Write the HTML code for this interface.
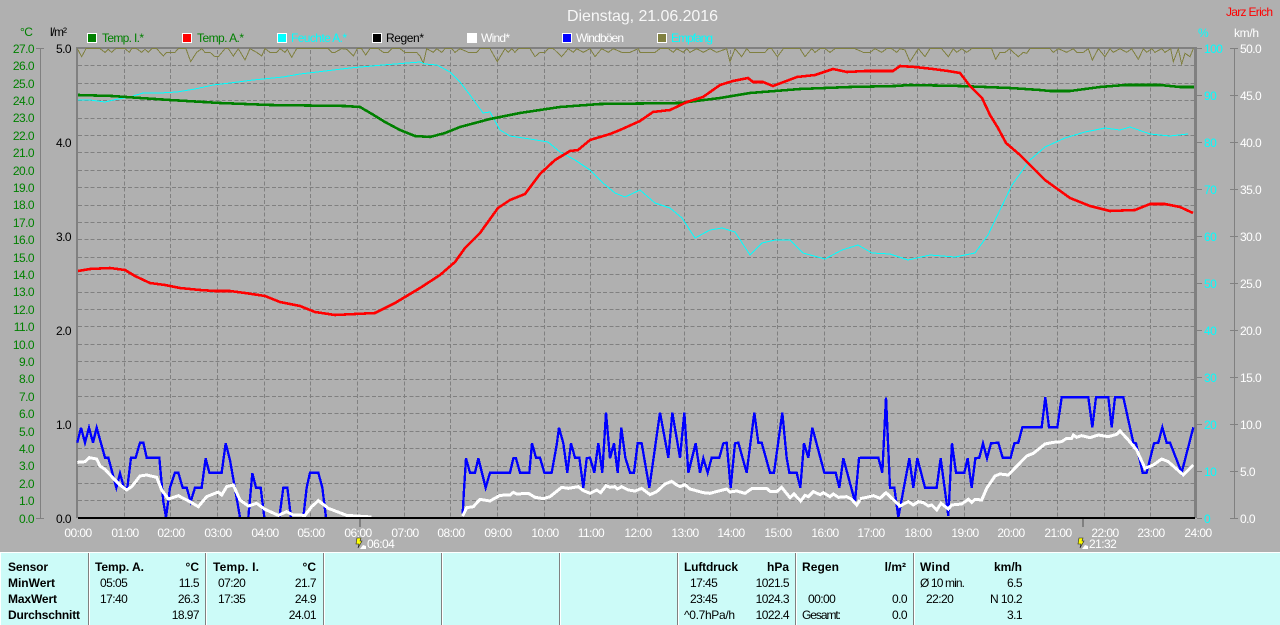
<!DOCTYPE html>
<html><head><meta charset="utf-8"><style>
html,body{margin:0;padding:0;background:#b0b0b0;overflow:hidden}
svg{display:block;font-family:"Liberation Sans",sans-serif;font-size:12px;letter-spacing:-.55px}
.g text{fill:#008000}.c text{fill:#0ff}.w text{fill:#fff}.k text{fill:#000}
.l{fill:none;stroke-linejoin:miter;shape-rendering:crispEdges}
</style></head><body>
<svg width="1280" height="625" viewBox="0 0 1280 625" xmlns="http://www.w3.org/2000/svg">
<rect width="1280" height="625" fill="#b0b0b0"/>
<text x="567" y="21" font-size="16" fill="#fff" textLength="151" style="letter-spacing:0;font-weight:normal" opacity=".9">Dienstag, 21.06.2016</text>
<text x="1226" y="16" fill="#f00" textLength="47" style="letter-spacing:0">Jarz Erich</text>

<!-- legend -->
<g stroke="#fff" stroke-width="1" shape-rendering="crispEdges">
<rect x="87.5" y="33.5" width="9" height="9" fill="#008000"/>
<rect x="182.5" y="33.5" width="9" height="9" fill="#f00"/>
<rect x="277.5" y="33.5" width="9" height="9" fill="#0ff"/>
<rect x="372.5" y="33.5" width="9" height="9" fill="#000"/>
<rect x="467.5" y="33.5" width="9" height="9" fill="#fff"/>
<rect x="562.5" y="33.5" width="9" height="9" fill="#00f"/>
<rect x="657.5" y="33.5" width="9" height="9" fill="#808040"/>
</g>
<g style="letter-spacing:0">
<text x="102" y="42" fill="#008000" textLength="42">Temp. I.*</text>
<text x="197" y="42" fill="#008000" textLength="47">Temp. A.*</text>
<text x="291" y="42" fill="#0ff" textLength="56">Feuchte A.*</text>
<text x="386" y="42" fill="#000" textLength="38">Regen*</text>
<text x="481" y="42" fill="#fff" textLength="29">Wind*</text>
<text x="576" y="42" fill="#fff" textLength="48">Windböen</text>
<text x="671" y="42" fill="#0ff" textLength="42">Empfang</text>
</g>

<!-- grid -->
<path stroke="#808080" stroke-width="1" stroke-dasharray="4 2.25" fill="none" shape-rendering="crispEdges" d="M78 65.5H1194M78 83.5H1194M78 100.5H1194M78 118.5H1194M78 135.5H1194M78 152.5H1194M78 170.5H1194M78 187.5H1194M78 205.5H1194M78 222.5H1194M78 239.5H1194M78 257.5H1194M78 274.5H1194M78 292.5H1194M78 309.5H1194M78 326.5H1194M78 344.5H1194M78 361.5H1194M78 379.5H1194M78 396.5H1194M78 413.5H1194M78 431.5H1194M78 448.5H1194M78 466.5H1194M78 483.5H1194M78 500.5H1194
M124.5 50V518M170.5 50V518M217.5 50V518M264.5 50V518M310.5 50V518M357.5 50V518M404.5 50V518M450.5 50V518M497.5 50V518M544.5 50V518M590.5 50V518M637.5 50V518M684.5 50V518M730.5 50V518M777.5 50V518M824.5 50V518M870.5 50V518M917.5 50V518M964.5 50V518M1010.5 50V518M1057.5 50V518M1104.5 50V518M1150.5 50V518"/>

<!-- axes -->
<g shape-rendering="crispEdges">
<rect x="40" y="48" width="1" height="470" fill="#808080"/>
<rect x="36" y="48" width="8" height="1" fill="#808080"/>
<rect x="36" y="518" width="8" height="1" fill="#808080"/>
<rect x="76" y="47" width="1121" height="2" fill="#808080"/>
<rect x="76" y="47" width="2" height="471" fill="#808080"/>
<rect x="1194" y="47" width="3" height="471" fill="#808080"/>
<rect x="1193" y="48" width="9" height="1" fill="#808080"/>
<rect x="1234" y="48" width="1" height="470" fill="#808080"/>
<path fill="none" stroke="#808080" d="M1197 95.500H1202M1197 142.500H1202M1197 189.500H1202M1197 236.500H1202M1197 283.500H1202M1197 330.500H1202M1197 377.500H1202M1197 424.500H1202M1197 471.500H1202M1197 518.500H1202M1230 48.500H1238M1230 95.500H1238M1230 142.500H1238M1230 189.500H1238M1230 236.500H1238M1230 283.500H1238M1230 330.500H1238M1230 377.500H1238M1230 424.500H1238M1230 471.500H1238M1230 518.500H1238"/>
<rect x="359" y="518" width="2" height="9" fill="#808080"/>
<rect x="1082" y="518" width="2" height="9" fill="#808080"/>
</g>

<!-- empfang -->
<g class="l" stroke="#808040" stroke-width="3" transform="translate(0,0) scale(.33333)">
<polyline points="232,146 245,170 258,146 300,146 315,157 325,148 335,157 347,146 375,146 388,157 395,146 410,146 425,157 435,148 445,157 455,146 470,146 490,168 500,157 525,157 535,146 558,146 572,185 590,157 605,146 615,157 630,157 645,170 655,170 675,146 685,146 700,168 715,146 735,180 750,146 770,157 785,168 795,146 810,157 830,157 840,146 855,157 862,148 875,172 890,146 985,146 995,157 1005,157 1025,146 1040,148 1060,168 1072,146 1085,146 1097,165 1110,146 1135,146 1150,157 1165,157 1175,146 1200,146 1215,157 1250,157 1260,168"/>
</g>
<g class="l" stroke="#808040" stroke-width="3" transform="translate(420,0) scale(.33333)">
<polyline points="0,168 10,190 20,146 40,157 50,146 65,157 75,146 95,146 105,157 120,146 145,157 170,157 180,146 210,146 232,185 255,146 265,157 275,146 285,157 295,146 330,146 345,170 360,157 375,157 385,146 400,146 425,170 445,146 460,157 470,146 490,157 510,146 525,170 545,146 565,157 580,146 605,157 630,157 655,146 660,157 705,157 720,146 745,146 760,157 770,146 790,157 800,146 810,157 830,146 850,157 870,146 890,157 920,146 930,185 945,146 965,170 980,146 990,157 1035,157 1045,146 1055,146 1072,170 1090,146 1140,146 1155,170 1175,146 1185,157 1200,146 1215,146 1230,157 1245,146 1290,146"/>
</g>
<g class="l" stroke="#808040" stroke-width="3" transform="translate(850,0) scale(.33333)">
<polyline points="0,146 15,146 40,157 60,157 75,146 95,157 110,146 125,146 140,157 150,146 165,150 180,185 205,146 225,170 240,146 275,146 295,170 310,146 320,157 335,146 350,157 365,146 425,146 437,178 450,157 465,157 480,146 490,157 505,170 520,157 530,160 540,146 600,146 610,157 625,146 650,157 670,146 680,157 700,157 715,146 727,180 745,146 765,170 780,146 790,157 810,146 830,157 845,146 865,178 880,146 890,157 905,146 915,157 935,146 945,157 962,146 970,185 985,146 995,192 1005,160 1020,170 1030,146"/>
</g>

<!-- feuchte -->
<polyline class="l" stroke="#0ff" stroke-width="1" points="78,100 90,100 105,102 118,99 130,97 143,93 160,93 177,92 195,89 213,85 230,83 253,80 283,77 300,74 317,72 350,68 383,65 420,62 425,64 437,65 450,72 460,82 470,95 483,113 490,112 500,130 510,136 530,139 548,142 560,152 575,160 590,170 603,183 615,193 625,197 640,190 655,203 670,208 682,218 695,238 710,230 722,228 735,232 750,255 762,243 775,240 790,240 803,253 825,259 842,250 858,245 872,253 890,254 908,260 930,255 955,257 975,253 988,235 1000,210 1012,185 1030,160 1045,147 1065,138 1085,132 1105,128 1120,130 1130,127 1150,134 1170,136 1188,134"/>

<!-- temp i -->
<polyline class="l" stroke="#008000" stroke-width="2.6" points="78,95 112,96 140,98 170,100 220,103 270,105 345,106 360,107 372,114 385,122 400,130 415,136 430,137 445,133 460,127 490,119 520,113 560,107 600,104 680,103 720,98 750,93 800,89 850,87 895,86 910,85 960,86 1010,88 1040,90 1050,91 1070,91 1100,87 1125,85 1160,85 1180,87 1194,87"/>
<!-- temp a -->
<polyline class="l" stroke="#f00" stroke-width="2.6" points="78,271 90,269 110,268 125,270 135,276 150,283 165,285 180,288 200,290 215,291 230,291 245,293 265,296 280,302 300,306 315,312 335,315 375,313 395,303 420,288 440,275 455,262 465,248 480,233 498,208 510,200 525,194 540,174 555,160 570,151 578,150 590,140 610,134 620,130 640,121 653,112 670,110 687,102 703,97 720,85 733,81 748,78 753,82 763,82 773,86 797,77 815,75 833,69 847,72 865,71 893,71 900,66 915,67 933,69 948,71 960,73 970,86 982,98 990,115 998,128 1006,143 1020,155 1045,180 1070,198 1090,206 1110,211 1135,210 1150,204 1165,204 1180,207 1193,213"/>

<!-- windböen -->
<g class="l" stroke="#00f" stroke-width="7">
<g transform="translate(0,390) scale(.33333)">
<polyline points="232,158 243,113 255,158 267,113 279,158 290,113 315,203 325,203 349,293 360,250 372,293 382,293 393,203 407,203 420,158 430,158 440,203 478,203 490,335 498,382 510,293 525,248 535,248 548,293 560,293 572,335 585,293 605,293 617,205 628,248 665,248 677,160 690,210 720,382"/>
<polyline points="745,382 757,250 768,293 782,293 793,382"/>
<polyline points="838,382 850,293 862,293 873,382"/>
<polyline points="910,382 920,293 930,248 955,248 967,293 978,382"/>
</g>
<polyline transform="translate(440,390) scale(.33333)" points="68,370 72,300 78,205 90,248 105,248 115,205 137,293 150,248 210,248 220,205 228,205 240,248 268,248 276,160 288,203 300,203 313,248 335,248 350,165 357,113 370,160 382,248 393,160 405,203 418,203 430,293 440,205 450,203 463,248 475,160 487,248 498,68 510,205 522,160 533,248 544,113 556,203 570,248 582,248 593,160 605,160 628,293 660,68 685,203 697,68 720,203 733,68 745,248 767,160 780,248 790,205 803,248 815,203 838,203 850,160 860,158 872,293 885,160 895,158 920,248 943,68 955,158 965,158 990,248 1002,248 1027,68 1040,203 1048,248 1070,248 1081,293 1092,160 1105,203 1117,113 1153,248 1187,248 1198,293 1210,205 1245,335 1257,205 1260,205"/>
<polyline transform="translate(860,390) scale(.33333)" points="0,203 55,203 67,248 78,22 90,293 103,293 115,382 148,205 160,293 172,205 195,293 230,293 242,205 265,378 276,160 288,248 313,248 323,205 335,293 346,205 358,203 369,160 381,205 393,160 415,158 428,203 452,203 463,160 475,158 487,112 545,112 556,22 567,112 592,112 605,22 685,22 697,112 708,22 745,22 755,112 765,22 790,22 820,158 828,160 848,248 860,248 882,160 895,158 907,112 920,158 930,158 965,248 1000,112"/>
</g>
<!-- wind -->
<g class="l" stroke="#fff" stroke-width="9">
<polyline transform="translate(0,390) scale(.33333)" points="232,217 255,215 268,203 290,207 300,228 315,238 340,265 360,285 380,300 395,290 420,258 440,255 470,262 485,300 505,327 535,317 560,330 575,338 595,350 620,320 655,306 665,315 680,290 700,285 720,330 745,348 770,340 795,358 835,376 860,365 880,375 915,376 935,350 955,332 985,355 1040,376 1115,381"/>
<polyline transform="translate(440,390) scale(.33333)" points="68,378 80,353 100,350 120,328 150,333 180,316 210,315 220,307 230,312 265,310 285,322 310,326 330,320 365,292 385,295 415,290 430,302 450,310 470,300 482,308 498,287 510,292 525,290 532,297 545,290 565,300 585,303 605,295 630,314 650,305 675,282 695,274 710,285 720,290 735,284 750,297 790,308 810,310 840,302 860,297 870,306 890,303 915,310 935,296 980,295 990,304 1010,305 1025,292 1050,323 1062,312 1082,333 1095,316 1105,320 1120,305 1140,314 1150,308 1170,320 1180,312 1195,322 1220,320 1235,328 1250,345 1260,330"/>
<polyline transform="translate(860,390) scale(.33333)" points="0,326 20,322 40,317 60,325 78,308 120,348 145,335 160,345 175,335 190,338 205,348 215,345 230,360 243,340 265,357 275,345 305,342 325,328 335,337 345,328 365,330 380,295 405,258 420,252 445,255 500,198 520,190 555,162 580,157 605,155 620,145 635,145 640,135 650,142 665,137 690,143 715,135 745,140 770,133 780,123 805,150 830,180 855,235 880,225 905,207 925,215 970,255 1000,225"/>
</g>
<rect x="78" y="517" width="1117" height="2" fill="#000" shape-rendering="crispEdges"/>

<!-- left labels -->
<text x="20" y="36" fill="#008000">°C</text>
<text x="50" y="36" fill="#000" textLength="17" style="letter-spacing:0">l/m²</text>
<g class="g">
<g text-anchor="end">
<text x="34" y="53">27.0</text><text x="34" y="70">26.0</text><text x="34" y="88">25.0</text><text x="34" y="105">24.0</text><text x="34" y="122">23.0</text><text x="34" y="140">22.0</text><text x="34" y="157">21.0</text><text x="34" y="175">20.0</text><text x="34" y="192">19.0</text><text x="34" y="209">18.0</text><text x="34" y="227">17.0</text><text x="34" y="244">16.0</text><text x="34" y="262">15.0</text><text x="34" y="279">14.0</text><text x="34" y="296">13.0</text><text x="34" y="314">12.0</text><text x="34" y="331">11.0</text><text x="34" y="349">10.0</text><text x="34" y="366">9.0</text><text x="34" y="383">8.0</text><text x="34" y="401">7.0</text><text x="34" y="418">6.0</text><text x="34" y="436">5.0</text><text x="34" y="453">4.0</text><text x="34" y="470">3.0</text><text x="34" y="488">2.0</text><text x="34" y="505">1.0</text><text x="34" y="523">0.0</text>
</g></g>
<g class="k">
<text x="56" y="53">5.0</text><text x="56" y="147">4.0</text><text x="56" y="241">3.0</text><text x="56" y="335">2.0</text><text x="56" y="429">1.0</text><text x="56" y="523">0.0</text>
</g>
<!-- right labels -->
<text x="1198" y="37" fill="#0ff">%</text>
<text x="1234" y="37" fill="#fff" textLength="25" style="letter-spacing:0">km/h</text>
<g class="c">
<text x="1204" y="53">100</text><text x="1204" y="100">90</text><text x="1204" y="147">80</text><text x="1204" y="194">70</text><text x="1204" y="241">60</text><text x="1204" y="288">50</text><text x="1204" y="335">40</text><text x="1204" y="382">30</text><text x="1204" y="429">20</text><text x="1204" y="476">10</text><text x="1204" y="523">0</text>
</g>
<g class="w">
<text x="1240" y="53">50.0</text><text x="1240" y="100">45.0</text><text x="1240" y="147">40.0</text><text x="1240" y="194">35.0</text><text x="1240" y="241">30.0</text><text x="1240" y="288">25.0</text><text x="1240" y="335">20.0</text><text x="1240" y="382">15.0</text><text x="1240" y="429">10.0</text><text x="1240" y="476">5.0</text><text x="1240" y="523">0.0</text>
</g>
<!-- time labels -->
<g class="w" text-anchor="middle">
<text x="78" y="537">00:00</text><text x="125" y="537">01:00</text><text x="171" y="537">02:00</text><text x="218" y="537">03:00</text><text x="265" y="537">04:00</text><text x="311" y="537">05:00</text><text x="358" y="537">06:00</text><text x="405" y="537">07:00</text><text x="451" y="537">08:00</text><text x="498" y="537">09:00</text><text x="545" y="537">10:00</text><text x="591" y="537">11:00</text><text x="638" y="537">12:00</text><text x="685" y="537">13:00</text><text x="731" y="537">14:00</text><text x="778" y="537">15:00</text><text x="825" y="537">16:00</text><text x="871" y="537">17:00</text><text x="918" y="537">18:00</text><text x="965" y="537">19:00</text><text x="1011" y="537">20:00</text><text x="1058" y="537">21:00</text><text x="1105" y="537">22:00</text><text x="1151" y="537">23:00</text><text x="1198" y="537">24:00</text>
</g>
<g class="w"><text x="367" y="548">06:04</text><text x="1089" y="548">21:32</text></g>
<path d="M357 538h4l-1 3h2l-4 7 1-4h-3z" fill="#ff0" stroke="#222" stroke-width=".6"/>
<path d="M360 549l3-4 3 1 0 3z" fill="#fff"/>
<path d="M1079 538h4l-1 3h2l-4 7 1-4h-3z" fill="#ff0" stroke="#222" stroke-width=".6"/>
<path d="M1082 549l3-4 3 1 0 3z" fill="#fff"/>

<!-- panel -->
<rect x="0" y="552" width="1280" height="73" fill="#ccfbf8"/>
<rect x="0" y="552" width="1280" height="1" fill="#fff"/>
<rect x="0" y="552" width="1" height="73" fill="#fff"/>
<g fill="#808080" shape-rendering="crispEdges">
<rect x="88" y="553" width="1" height="72"/><rect x="205" y="553" width="1" height="72"/><rect x="323" y="553" width="1" height="72"/><rect x="441" y="553" width="1" height="72"/><rect x="559" y="553" width="1" height="72"/><rect x="677" y="553" width="1" height="72"/><rect x="795" y="553" width="1" height="72"/><rect x="913" y="553" width="1" height="72"/>
</g>
<g fill="#fff" shape-rendering="crispEdges">
<rect x="89" y="553" width="1" height="72"/><rect x="206" y="553" width="1" height="72"/><rect x="324" y="553" width="1" height="72"/><rect x="442" y="553" width="1" height="72"/><rect x="560" y="553" width="1" height="72"/><rect x="678" y="553" width="1" height="72"/><rect x="796" y="553" width="1" height="72"/><rect x="914" y="553" width="1" height="72"/>
</g>
<g fill="#000">
<g font-weight="bold" style="letter-spacing:0">
<text x="8" y="571" textLength="40">Sensor</text><text x="8" y="587" textLength="47">MinWert</text><text x="8" y="603" textLength="49">MaxWert</text><text x="8" y="619" textLength="72">Durchschnitt</text>
<text x="95" y="571" textLength="49">Temp. A.</text><text x="199" y="571" text-anchor="end">°C</text>
<text x="213" y="571" textLength="46">Temp. I.</text><text x="316" y="571" text-anchor="end">°C</text>
<text x="684" y="571" textLength="54">Luftdruck</text><text x="789" y="571" text-anchor="end">hPa</text>
<text x="802" y="571" textLength="37">Regen</text><text x="906" y="571" text-anchor="end">l/m²</text>
<text x="920" y="571" textLength="30">Wind</text><text x="1022" y="571" text-anchor="end">km/h</text>
</g>
<text x="100" y="587">05:05</text><text x="199" y="587" text-anchor="end">11.5</text>
<text x="100" y="603">17:40</text><text x="199" y="603" text-anchor="end">26.3</text>
<text x="199" y="619" text-anchor="end">18.97</text>
<text x="218" y="587">07:20</text><text x="316" y="587" text-anchor="end">21.7</text>
<text x="218" y="603">17:35</text><text x="316" y="603" text-anchor="end">24.9</text>
<text x="316" y="619" text-anchor="end">24.01</text>
<text x="690" y="587">17:45</text><text x="789" y="587" text-anchor="end">1021.5</text>
<text x="690" y="603">23:45</text><text x="789" y="603" text-anchor="end">1024.3</text>
<text x="684" y="619" textLength="51" style="letter-spacing:0">^0.7hPa/h</text><text x="789" y="619" text-anchor="end">1022.4</text>
<text x="808" y="603">00:00</text><text x="907" y="603" text-anchor="end">0.0</text>
<text x="802" y="619" textLength="39" style="letter-spacing:0">Gesamt:</text><text x="907" y="619" text-anchor="end">0.0</text>
<text x="920" y="587" textLength="45" style="letter-spacing:0">Ø 10 min.</text><text x="1022" y="587" text-anchor="end">6.5</text>
<text x="926" y="603">22:20</text><text x="1022" y="603" text-anchor="end">N 10.2</text>
<text x="1022" y="619" text-anchor="end">3.1</text>
</g>
</svg>
</body></html>
